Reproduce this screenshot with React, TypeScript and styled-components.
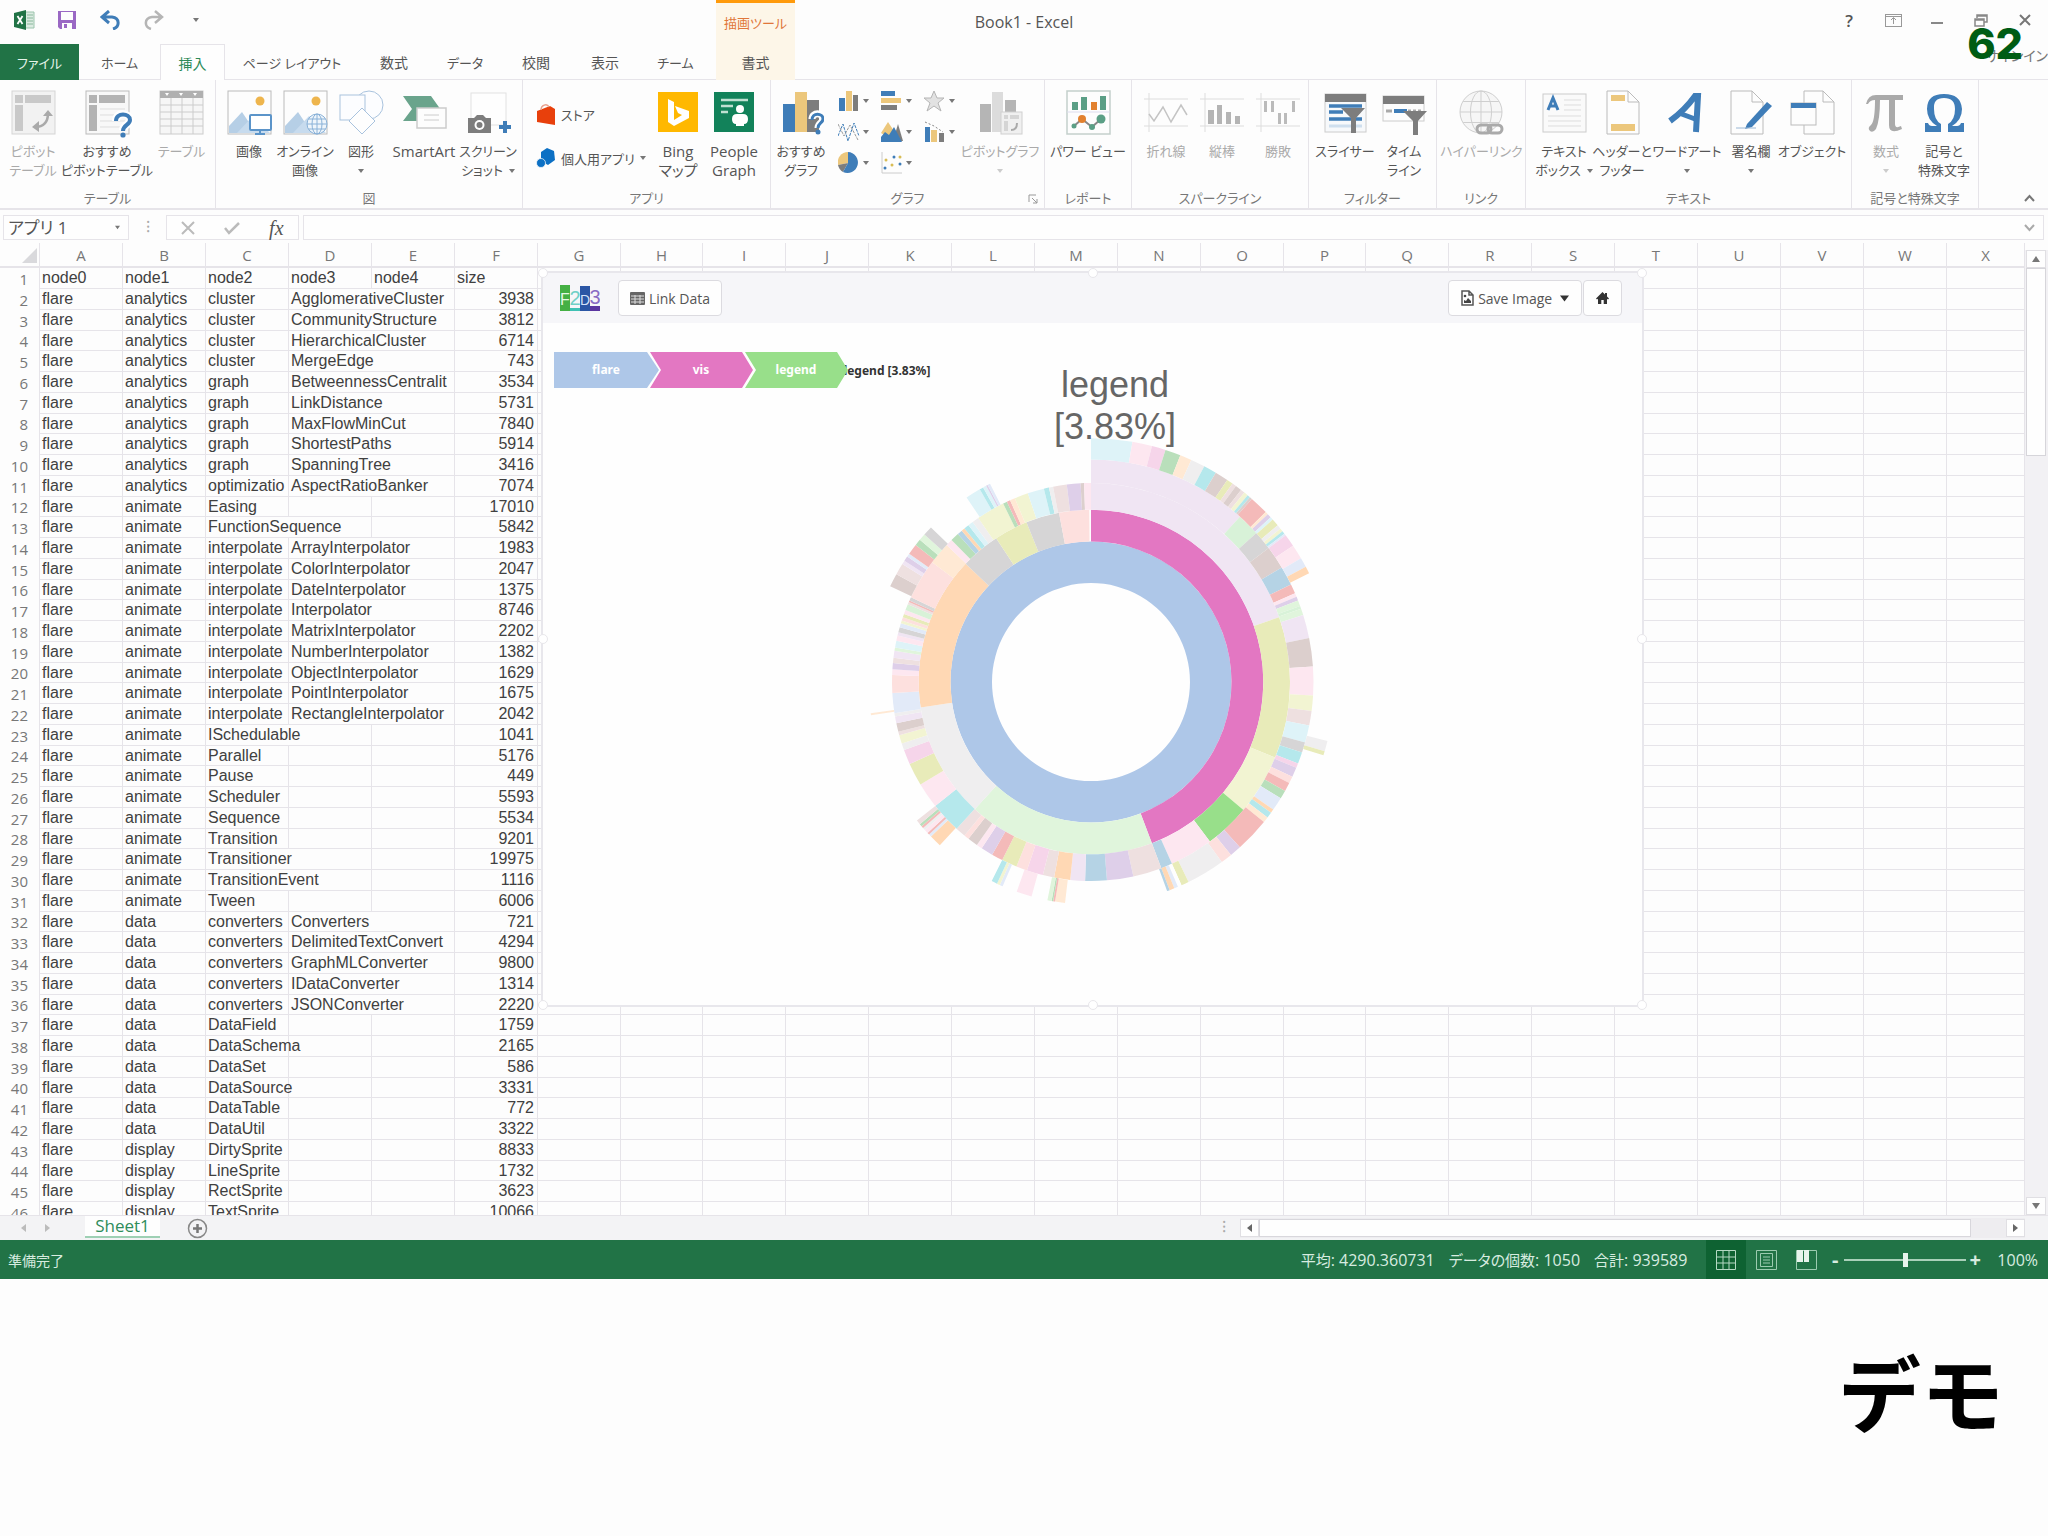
import React from "react";
import styled, { createGlobalStyle, css } from "styled-components";

const green = "#217346";
const line = "#e6e4e9";
const ui = `"Open Sans", "Noto Sans CJK JP", sans-serif`;
const sheetFont = `"Liberation Sans", "Noto Sans CJK JP", sans-serif`;

const Global = createGlobalStyle`
  * { box-sizing: border-box; }
  body { margin: 0; background: #fdfdfd; font-family: ${ui}; color: #555; overflow-x: hidden; }
  button, input { font: inherit; color: inherit; border: 0; background: none; padding: 0; margin: 0; }
  svg { display: block; flex: none; }
`;

const Page = styled.div`
  position: relative;
  min-height: 100vh;
  display: flex;
  flex-direction: column;
  overflow: hidden;
`;

/* ---------- title bar and tabs ---------- */
const Header = styled.header`
  display: grid;
  grid-template-columns: 716px 79px 1fr;
  grid-template-rows: 44px 36px;
  background: #fdfdfd;
`;
const QuickAccess = styled.div`
  grid-area: 1 / 1;
  display: flex;
  align-items: center;
  padding: 0 0 4px 13px;
  gap: 21px;
`;
const PlainButton = styled.button`
  display: flex;
  align-items: center;
  justify-content: center;
  min-width: 22px;
  height: 22px;
`;
const ContextTitle = styled.div`
  grid-area: 1 / 2;
  border-top: 3px solid #ff9a0a;
  background: #fdf6e8;
  color: #e0763a;
  font-size: 13px;
  font-feature-settings: "palt";
  line-height: 40px;
  text-align: center;
  white-space: nowrap;
`;
const BookTitle = styled.h1`
  grid-column: 1 / -1;
  grid-row: 1;
  justify-self: center;
  margin: 0;
  font-size: 16px;
  font-weight: 400;
  line-height: 44px;
`;
const WindowControls = styled.div`
  grid-column: 3;
  grid-row: 1;
  justify-self: end;
  display: flex;
  align-items: center;
  gap: 22px;
  padding: 0 12px 4px 0;
  font-size: 17px;
  font-weight: 600;
`;
const Tabs = styled.nav`
  grid-area: 2 / 1;
  display: flex;
  border-bottom: 1px solid ${line};
`;
const Tab = styled.button<{ $w: number; $kana?: boolean; $kind?: "file" | "active" | "context" }>`
  width: ${(p) => p.$w}px;
  height: 36px;
  font-size: ${(p) => (p.$kana ? 13 : 14)}px;
  font-feature-settings: "palt";
  white-space: nowrap;
  ${(p) => p.$kind === "file" && css`background: ${green}; color: #e4f3ea;`}
  ${(p) => p.$kind === "active" && css`
    background: #fefefe; color: #2c8a57;
    border: 1px solid ${line}; border-bottom: 0;
  `}
  ${(p) => p.$kind === "context" && css`grid-area: 2 / 2; background: #fdf6e8;`}
`;
const SignIn = styled.a`
  grid-area: 2 / 3;
  border-bottom: 1px solid ${line};
  color: #777;
  font-size: 14px;
  font-feature-settings: "palt";
  line-height: 24px;
  text-align: right;
  text-decoration: none;
`;
const SlideNumber = styled.div`
  position: absolute;
  top: 16px;
  right: 25px;
  font: 800 43px/54px Inter, sans-serif;
  color: #005c14;
`;

/* ---------- ribbon ---------- */
const Ribbon = styled.div`
  display: flex;
  height: 130px;
  border-bottom: 2px solid ${line};
  background: #fdfdfd;
`;
const Group = styled.section<{ $w: number }>`
  position: relative;
  width: ${(p) => p.$w}px;
  flex: none;
  display: flex;
  flex-direction: column;
  border-right: 1px solid ${line};
`;
const GroupItems = styled.div<{ $pad?: number }>`
  flex: 1;
  display: flex;
  padding: 10px 0 0 ${(p) => p.$pad ?? 0}px;
`;
const GroupLabel = styled.div`
  height: 19px;
  font-size: 13px;
  line-height: 18px;
  font-feature-settings: "palt";
  text-align: center;
  color: #777;
`;
const Big = styled.button<{ $w: number; $off?: boolean; $latin?: boolean }>`
  width: ${(p) => p.$w}px;
  flex: none;
  display: flex;
  flex-direction: column;
  align-items: center;
  align-self: flex-start;
  gap: 7px;
  font-size: ${(p) => (p.$latin ? 15 : 13)}px;
  font-feature-settings: "palt";
  line-height: 19px;
  white-space: nowrap;
  color: ${(p) => (p.$off ? "#aaa" : "#555")};
`;
const BigText = styled.span`
  display: flex;
  flex-direction: column;
  align-items: center;
`;
const TextLine = styled.span`
  display: flex;
  align-items: center;
  gap: 6px;
  height: 19px;
`;
const AppList = styled.div`
  width: 128px;
  display: flex;
  flex-direction: column;
  gap: 20px;
  padding: 12px 0 0 13px;
`;
const AppButton = styled.button`
  display: flex;
  align-items: center;
  gap: 5px;
  height: 24px;
  font-size: 13px;
  font-feature-settings: "palt";
  white-space: nowrap;
`;
const ChartGrid = styled.div`
  width: 135px;
  display: grid;
  grid-template-columns: repeat(3, 43px);
  grid-auto-rows: 31px;
  padding-left: 7px;
`;
const ChartButton = styled.button`
  display: flex;
  align-items: center;
  gap: 3px;
  height: 22px;
`;
const Launcher = styled.button`
  position: absolute;
  right: 6px;
  bottom: 4px;
`;
const Collapse = styled.button`
  margin: auto 13px 6px auto;
`;

/* ---------- formula bar ---------- */
const FormulaBar = styled.div`
  display: flex;
  height: 33px;
  padding: 5px 4px 3px 3px;
`;
const Box = styled.div<{ $w?: number }>`
  width: ${(p) => (p.$w ? p.$w + "px" : "auto")};
  flex: ${(p) => (p.$w ? "none" : 1)};
  display: flex;
  align-items: center;
  justify-content: space-between;
  border: 1px solid ${line};
  background: #fefefe;
  padding: 0 8px 0 4px;
`;
const NameInput = styled.input`
  width: 90px;
  font-size: 17px;
  line-height: 20px;
  font-feature-settings: "palt";
`;
const FormulaInput = styled.input`
  flex: 1;
  font-size: 16px;
  line-height: 20px;
`;
const Grip = styled.span`
  width: 37px;
  line-height: 22px;
  text-align: center;
  color: #aaa;
`;
const FxTools = styled(Box)`
  justify-content: space-around;
  padding: 0;
  margin-right: 4px;
  font: italic 400 20px/22px "Liberation Serif", serif;
`;

/* ---------- sheet ---------- */
const SheetArea = styled.main`
  position: relative;
  display: flex;
  height: 972px;
  overflow: hidden;
`;
const GridWrap = styled.div`
  flex: 1;
  min-width: 0;
`;
const Table = styled.table`
  width: 100%;
  table-layout: fixed;
  border-collapse: separate;
  border-spacing: 0;
  font: 16px/20px ${sheetFont};
  color: #404040;
  th, td { padding: 0; height: 21px; border-right: 1px solid ${line}; white-space: nowrap; overflow: hidden; }
  th { font: 400 15px/20px ${ui}; color: #777; }
  thead th { height: 25px; line-height: 22px; border-bottom: 2px solid ${line}; }
  tbody tr:nth-child(4n) th, tbody tr:nth-child(4n) td { height: 20px; line-height: 19px; }
  tbody th { text-align: right; padding-right: 11px; }
  td { border-bottom: 1px solid ${line}; padding-left: 2px; }
`;
const Cell = styled.td<{ $spill?: boolean; $num?: boolean }>`
  && { ${(p) => p.$spill && "overflow: visible;"} ${(p) => p.$num && "text-align: right; padding-right: 3px;"} }
`;
const VScroll = styled.div`
  width: 23px;
  margin-top: 7px;
  display: flex;
  flex-direction: column;
  background: #f2f1f4;
  padding: 0 2px 0 1px;
`;
const ScrollButton = styled.button`
  display: flex;
  align-items: center;
  justify-content: center;
  min-width: 19px;
  height: 18px;
  background: #fefefe;
  border: 1px solid #e0dfe3;
`;
const VThumb = styled.div`
  height: 188px;
  margin-bottom: auto;
  background: #fefefe;
  border: 1px solid #d6d5da;
`;

/* ---------- chart object floating on the sheet ---------- */
const Panel = styled.section`
  position: absolute;
  left: 541px;
  top: 28px;
  width: 1103px;
  height: 736px;
  background: #fefefe;
  border: 2px solid #e8e7ec;
`;
const Handle = styled.i<{ $x: string; $y: string }>`
  position: absolute;
  left: ${(p) => p.$x};
  top: ${(p) => p.$y};
  width: 10px;
  height: 10px;
  margin: -5px;
  border-radius: 50%;
  background: #fff;
  border: 1px solid #e8e7eb;
`;
const PanelBar = styled.div`
  display: flex;
  align-items: center;
  height: 50px;
  padding: 0 20px 0 17px;
  background: #f6f6f9;
`;
const PanelButton = styled.button<{ $w: number; $gap?: number }>`
  display: flex;
  align-items: center;
  justify-content: center;
  gap: 4px;
  width: ${(p) => p.$w}px;
  height: 36px;
  margin-left: ${(p) => p.$gap ?? 0}px;
  border: 1px solid #dcdbe0;
  border-radius: 4px;
  background: #fefefe;
  font-size: 14px;
  white-space: nowrap;
`;
const Spacer = styled.div`flex: 1;`;
const PanelBody = styled.div`
  display: grid;
  padding: 29px 0 0 11px;
  svg { grid-area: 1 / 1; }
`;
const Sunburst = styled.svg`
  justify-self: center;
  margin-right: 15px;
`;

/* ---------- sheet tabs and status bar ---------- */
const SheetTabs = styled.div`
  display: flex;
  height: 25px;
  background: #f3f3f5;
  border-top: 1px solid ${line};
`;
const SheetNav = styled.div`
  width: 85px;
  display: flex;
  align-items: center;
  padding-left: 13px;
  gap: 1px;
  color: #bbb;
`;
const SheetTab = styled.button`
  width: 75px;
  height: 22px;
  background: #fefefe;
  border-bottom: 2px solid #9ed0b4;
  color: #2f8d5b;
  font-size: 17px;
  line-height: 18px;
`;
const AddSheet = styled.button`
  margin: 1px auto 0 27px;
  align-self: center;
`;
const HScroll = styled.div`
  width: 785px;
  display: flex;
  align-items: center;
  background: #eeedf0;
  margin-right: 23px;
  margin-top: 2px;
  height: 20px;
`;
const HThumb = styled.div`
  width: 712px;
  height: 18px;
  margin-right: auto;
  background: #fefefe;
  border: 1px solid #d8d7dc;
`;
const Dots = styled.span`
  width: 18px;
  line-height: 20px;
  color: #aaa;
`;
const StatusBar = styled.footer`
  display: flex;
  align-items: center;
  height: 39px;
  padding: 0 10px 0 8px;
  background: ${green};
  color: #d8ece0;
  font-size: 14px;
  font-feature-settings: "palt";
  white-space: nowrap;
`;
const Stats = styled.div`
  display: flex;
  gap: 14px;
  margin-left: auto;
  margin-right: 19px;
  font-size: 16px;
`;
const StatLabel = styled.span`
  font-size: 15px;
`;
const ViewButton = styled.button<{ $on?: boolean }>`
  display: flex;
  align-items: center;
  justify-content: center;
  width: 40px;
  height: 39px;
  background: ${(p) => (p.$on ? "#0e6232" : "transparent")};
`;
const ZoomButton = styled.button`
  width: 18px;
  font-size: 20px;
  font-weight: 700;
  line-height: 36px;
`;
const ZoomSlider = styled.input`
  appearance: none;
  width: 122px;
  height: 20px;
  &::-webkit-slider-runnable-track { height: 2px; background: #a9d0b9; }
  &::-webkit-slider-thumb { appearance: none; width: 5px; height: 14px; margin-top: -6px; background: #e8f4ec; }
`;
const ZoomLevel = styled.span`
  margin-left: 13px;
  font-size: 16px;
`;
const Caption = styled.h2`
  margin: 49px 44px 0 auto;
  font: 700 83px/124px "Noto Sans CJK JP", sans-serif;
  color: #000;
`;

/* ---------- icons ---------- */
const Caret = ({ c = "#777", s = 6 }: { c?: string; s?: number }) => (
  <svg width={s} height={s} viewBox="0 0 6 6"><path d="M0 1h6L3 5z" fill={c} /></svg>
);
const I: React.FC<{ children: React.ReactNode }> = ({ children }) => (
  <svg width="45" height="45" viewBox="0 0 45 45" fill="none">{children}</svg>
);
const AskBox = styled.svg`
  margin-bottom: -4px;
`;
const blue = "#3f7db8";
const tan = "#ecc77c";
const grey = "#7d7d7d";

const PivotIcon = () => (
  <I>
    <rect x="1" y="1" width="43" height="43" fill="#f2f2f2" stroke="#d5d5d5" />
    <path d="M4 5h8v8H4zM14 5h26v8H14zM4 15h8v26H4z" fill="#c9c9c9" />
    <path d="M24 37c9 0 13-5 13-14" stroke="#aaa" strokeWidth="2.5" />
    <path d="M32 26l5-6 5 6zM28 31l-7 6 7 5z" fill="#aaa" />
  </I>
);
const PivotAskIcon = () => (
  <AskBox width="53" height="49" viewBox="-4 0 53 49" fill="none">
    <rect x="1" y="1" width="43" height="43" fill="#f8f8f8" stroke="#bbb" />
    <path d="M4 5h8v8H4zM14 5h26v8H14zM4 15h8v26H4z" fill="#b3b3b3" />
    <path d="M15 19h25M15 25h25M15 31h25M15 37h25" stroke="#ddd" />
    <path d="M31 31c0-10 14-8 14-1 0 5-7 5-7 10" stroke="#fff" strokeWidth="8" />
    <path d="M31 31c0-9 14-8 14-1 0 5-7 5-7 11" stroke={blue} strokeWidth="4" />
    <circle cx="38" cy="45" r="2.6" fill={blue} />
  </AskBox>
);
const TableIcon = () => (
  <I>
    <rect x="1" y="1" width="43" height="43" fill="#f6f6f6" stroke="#ccc" />
    <path d="M1 1h43v7H1z" fill="#b0b0b0" />
    <path d="M6 3h4l-2 3zM20 3h4l-2 3zM34 3h4l-2 3z" fill="#fff" />
    <path d="M1 15h43M1 22h43M1 29h43M1 36h43M12 8v36M23 8v36M34 8v36" stroke="#ccc" />
  </I>
);
const Photo = () => (
  <g>
    <rect x="1" y="1" width="43" height="43" fill="#fdfdfd" stroke="#bbb" />
    <circle cx="33" cy="11" r="4.5" fill="#eeb54d" />
    <path d="M2 43V36L15 22l14 21z" fill="#b6cfe6" />
    <path d="M10 43L26 26l17 17z" fill="#c7dbee" />
  </g>
);
const PictureIcon = () => (
  <I><Photo /><rect x="23" y="25" width="21" height="15" rx="1" fill="#fff" stroke="#5b94c9" strokeWidth="2" /><path d="M33 40v3M28 44h10" stroke="#5b94c9" strokeWidth="2" /></I>
);
const Globe = ({ cx, cy, r, c, f }: { cx: number; cy: number; r: number; c: string; f: string }) => (
  <g stroke={c} fill="none">
    <circle cx={cx} cy={cy} r={r} fill={f} />
    <ellipse cx={cx} cy={cy} rx={r / 2} ry={r} />
    <path d={`M${cx - r} ${cy}h${2 * r}M${cx} ${cy - r}v${2 * r}M${cx - r * 0.85} ${cy - r / 2}h${r * 1.7}M${cx - r * 0.85} ${cy + r / 2}h${r * 1.7}`} />
  </g>
);
const OnlinePictureIcon = () => <I><Photo /><Globe cx={34} cy={34} r={10} c="#8ab2d8" f="#eef5fb" /></I>;
const ShapesIcon = () => (
  <I><circle cx="30" cy="15" r="14" fill="#fcfdff" stroke="#a9c3de" /><rect x="1" y="5" width="25" height="25" fill="#fcfdff" stroke="#a9c3de" /><path d="M23 18l13 13-13 13-13-13z" fill="#fefefe" stroke="#a9c3de" /></I>
);
const SmartArtIcon = () => (
  <I><path d="M1 6h28l10 14H16v11H1l9-12z" fill="#6aa48c" /><rect x="15" y="18" width="29" height="20" fill="#fdfdfd" stroke="#ccc" strokeWidth="1.5" /><path d="M22 25h15M22 30h15" stroke="#ccc" /></I>
);
const ScreenshotIcon = () => (
  <I><rect x="5" y="3" width="35" height="32" fill="#fefefe" stroke="#e2e2e2" /><path d="M2 28h6l3-3h6l3 3h5v15H2z" fill={grey} /><circle cx="13.500" cy="35" r="5" fill="#fff" /><circle cx="13.500" cy="35" r="3" fill={grey} /><path d="M39 31v12M33 37h12" stroke={blue} strokeWidth="4" /></I>
);
const StoreIcon = () => (
  <svg width="20" height="24" viewBox="0 0 20 24"><path d="M1 9l13-5 5 3v16L1 20z" fill="#e8400c" /><path d="M5 8c0-5 6-7 8-3" stroke="#e8a08c" fill="none" strokeWidth="1.500" /></svg>
);
const MyAppsIcon = () => (
  <svg width="20" height="22" viewBox="0 0 20 22"><path d="M11 1l7 3 1 9-7 5-7-4V5z" fill="#0c70c4" /><circle cx="5" cy="16" r="4.500" fill="#0c70c4" stroke="#fff" strokeWidth=".7" /></svg>
);
const BingIcon = () => (
  <I><rect x="2" y="2" width="40" height="40" fill="#ffb800" /><path d="M12 9l6 3v18l8-5-4-2-3-7 14 5v7L18 36l-6-4z" fill="#fff" /></I>
);
const PeopleIcon = () => (
  <I><rect x="2" y="2" width="40" height="40" fill="#12825a" /><path d="M9 10h27M9 16h12M9 22h7" stroke="#bfe0d1" strokeWidth="2.5" /><circle cx="28" cy="19" r="4" fill="#fff" /><path d="M20 29q0-5 5-5h6q5 0 5 5t-4 5v2h-8v-2q-4 0-4-5z" fill="#fff" /></I>
);
const RecChartIcon = () => (
  <I><path d="M4 14h12v28H4z" fill={blue} /><path d="M16 2h12v40H16z" fill={tan} /><path d="M28 10h12v32H28z" fill={grey} /><path d="M33 29c0-7 11-7 11 0 0 4-5 4-5 9" stroke="#fff" strokeWidth="7" /><path d="M33 30c0-8 11-7 11-1 0 4-5 4-5 9" stroke={blue} strokeWidth="3" /><circle cx="39" cy="42" r="2.500" fill={blue} /></I>
);
const PivotChartIcon = () => (
  <I><path d="M2 14h11v28H2z" fill="#b5b5b5" /><path d="M14 2h11v40H14z" fill="#dcdcdc" /><path d="M27 10h11v12H27z" fill="#b5b5b5" /><rect x="23" y="22" width="21" height="22" fill="#f0f0f0" stroke="#d0d0d0" /><path d="M26 25h4v4h-4zM32 25h9v4h-9zM26 31h4v10h-4z" fill="#d5d5d5" /><path d="M33 40q6 0 6-7" stroke="#aaa" strokeWidth="2" /></I>
);
const small: React.ReactNode[] = [
  <><path d="M1 8h6v13H1z" fill={blue} /><path d="M8 1h6v20H8z" fill={tan} /><path d="M15 5h5v16h-5z" fill={grey} /></>,
  <><path d="M0 1h14v5H0z" fill={blue} /><path d="M0 8h20v5H0z" fill={tan} /><path d="M0 15h16v5H0z" fill={grey} /></>,
  <><path d="M10 1l3 7h7l-6 5 3 8-7-5-7 5 3-8-6-5h7z" fill="#e2e2e2" stroke="#b5b5b5" /></>,
  <><path d="M0 15L5 3l5 17 6-18 5 13" stroke={blue} fill="none" strokeDasharray="3 1" /><path d="M0 3l6 12L12 4l8 15" stroke="#9a9a9a" fill="none" strokeDasharray="3 1" /></>,
  <><path d="M12 20L17 3l5 17z" fill={grey} /><path d="M0 12L7 1l8 12v8z" fill={tan} /><path d="M0 21v-5l4-5 4 3 5-8 8 15z" fill={blue} /></>,
  <><path d="M1 6h5v15H1z" fill={blue} /><path d="M7 9h6v12H7z" fill={tan} /><path d="M15 12h5v9h-5z" fill={grey} /><path d="M1 1l9 4 9 6" stroke="#888" fill="none" strokeDasharray="2 2" /></>,
  <><path d="M10 11L10 0A10.500 10.500 0 0 0 0 13z" fill={tan} /><path d="M10 11L0 13a10.500 10.500 0 0 0 5 7z" fill={grey} /><path d="M10 11V0a10.500 10.500 0 1 1-5 20z" fill={blue} /></>,
  <><path d="M1 0v21h20" stroke="#ccc" fill="none" /><g fill={blue}><circle cx="4" cy="16" r="1.500" /><circle cx="13" cy="5" r="1.500" /><circle cx="19" cy="12" r="1.500" /></g><g fill="#d8bd55"><circle cx="5" cy="8" r="1.500" /><circle cx="11" cy="13" r="1.500" /><circle cx="19" cy="5" r="1.500" /></g></>,
];
const PowerViewIcon = () => (
  <I><rect x="1" y="1" width="43" height="43" fill="#fdfdfd" stroke="#c4cfcb" strokeWidth="1.5" /><path d="M1 22h43" stroke="#dde" /><path d="M6 12h6v8H6zM15 7h6v13h-6zM34 6h6v14h-6z" fill="#5b9f86" /><path d="M25 12h6v8h-6z" fill="#e2812f" /><path d="M8 36l8-7 10 8 9-8" stroke="#888" strokeWidth="2" /><circle cx="8" cy="36" r="2.500" fill="#5b9f86" /><circle cx="16" cy="29" r="4" fill="#e2812f" /><circle cx="26" cy="37" r="3" fill="#5b9f86" /><circle cx="35" cy="29" r="4.500" fill="#5b9f86" /></I>
);
const axes = <path d="M0 9h44M0 36h44M5 3v39" stroke="#ddd" />;
const SparkLine = () => <I>{axes}<path d="M5 24l5 7 9-14 8 15 10-17 6 10" stroke="#c4c4c4" strokeWidth="1.500" /></I>;
const SparkCol = () => <I>{axes}<path d="M8 20h6v14H8zM17 15h5v19h-5zM26 22h5v12h-5zM35 26h5v8h-5z" fill="#b4b4b4" /></I>;
const SparkWin = () => <I>{axes}<path d="M8 11h3v11H8zM15 11h3v11h-3zM22 23h3v11h-3zM28 23h3v11h-3zM36 11h3v11h-3z" fill="#bbb" /></I>;
const Funnel = ({ x, y }: { x: number; y: number }) => (
  <path transform={`translate(${x} ${y})`} d="M0 0h24L15 10v15h-5V10z" fill={grey} />
);
const SlicerIcon = () => (
  <I><rect x="2" y="4" width="41" height="38" fill="#f7f9fb" stroke="#ccc" /><path d="M2 4h41v8H2z" fill={grey} /><path d="M6 16h33M6 22h14M6 29h33" stroke={blue} strokeWidth="3.500" /><path d="M6 36h33" stroke="#cfdfee" strokeWidth="3" /><Funnel x={18} y={18} /></I>
);
const TimelineIcon = () => (
  <I><rect x="1" y="6" width="41" height="25" fill="#fdfdfd" stroke="#ccc" /><path d="M1 6h41v8H1z" fill={grey} /><path d="M4 21h6M26 21h3M31 21h3M36 21h3" stroke="#aaa" strokeWidth="3" /><path d="M12 21h13" stroke={blue} strokeWidth="4" /><Funnel x={21} y={21} /></I>
);
const LinkIcon = () => (
  <I><Globe cx={22} cy={22} r={21} c="#cfcfcf" f="#f6f6f6" /><rect x="18" y="35" width="14" height="8" rx="4" stroke="#aaa" strokeWidth="3" /><rect x="29" y="35" width="14" height="8" rx="4" stroke="#aaa" strokeWidth="3" /></I>
);
const TextBoxIcon = () => (
  <I><rect x="1" y="4" width="43" height="38" fill="#fafafa" stroke="#ccc" /><path d="M6 20l5-12 5 12M8 16h6" stroke={blue} strokeWidth="3" /><path d="M22 10h17M22 15h17M22 20h17M6 26h33M6 31h33M6 36h33" stroke="#ddd" /></I>
);
const Doc = ({ x, w = 32 }: { x: number; w?: number }) => (
  <path d={`M${x} 1h${w - 11}l11 11v32h-${w}zM${x + w - 11} 1v11h11`} fill="#fdfdfd" stroke="#bbb" />
);
const HeaderIcon = () => <I><Doc x={7} /><path d="M11 5h14v6H11zM11 34h24v7H11z" fill={tan} /></I>;
const WordArtIcon = () => <I><path d="M5 31Q20 20 30 6l3 0-2 36" stroke={blue} strokeWidth="6" fill="none" /><path d="M14 23l16 6" stroke={blue} strokeWidth="5" /></I>;
const SignIcon = () => (
  <I><Doc x={2} /><path d="M18 34L38 12l5 4-20 21-7 2z" fill={blue} /><path d="M7 38h20" stroke="#9bb8d5" /></I>
);
const ObjectIcon = () => (
  <I><Doc x={14} w={30} /><rect x="1" y="13" width="25" height="22" fill="#fdfdfd" stroke="#bbb" /><path d="M1 13h25v5H1z" fill={blue} /></I>
);
const EquationIcon = () => (
  <I><path d="M2 14q2-9 10-9h27v5h-8v24q0 5 6 2l1 3q-13 6-13-4V10H16q0 20-4 29-3 4-6 2-3-3 1-6 4-4 4-25-5 0-7 4z" fill="#aaa" /></I>
);
const OmegaIcon = () => (
  <I><path d="M3 42V33h3q1 3 4 3h5Q5 30 5 19 5 4 22 4t18 15q0 11-10 17h5q3 0 4-3h3v9H26v-8q7-4 7-15Q33 8 22 8T12 19q0 11 7 15v8z" fill={blue} /></I>
);

/* ---------- ribbon data ---------- */
type Item = { w: number; icon: React.ReactNode; lines: string[]; off?: boolean; latin?: boolean; caret?: boolean };
const RibbonButton = ({ w, icon, lines, off, latin, caret }: Item) => (
  <Big $w={w} $off={off} $latin={latin}>
    {icon}
    <BigText>
      {lines.map((t, i) => (
        <TextLine key={t}>{t}{caret && i === 1 && <Caret />}</TextLine>
      ))}
      {caret && lines.length === 1 && <TextLine><Caret c={off ? "#ccc" : "#777"} /></TextLine>}
    </BigText>
  </Big>
);
const RibbonGroup = ({ w, label, pad, items, children }: { w: number; label: string; pad?: number; items?: Item[]; children?: React.ReactNode }) => (
  <Group $w={w} aria-label={label}>
    <GroupItems $pad={pad}>{children}{items?.map((it) => <RibbonButton key={it.lines[0]} {...it} />)}</GroupItems>
    <GroupLabel>{label}</GroupLabel>
  </Group>
);

/* ---------- sheet data ---------- */
const columns = "ABCDEFGHIJKLMNOPQRSTUVWX".split("");
const source = `node0|node1|node2|node3|node4|size
analytics|cluster|AgglomerativeCluster|3938
analytics|cluster|CommunityStructure|3812
analytics|cluster|HierarchicalCluster|6714
analytics|cluster|MergeEdge|743
analytics|graph|BetweennessCentralit|3534
analytics|graph|LinkDistance|5731
analytics|graph|MaxFlowMinCut|7840
analytics|graph|ShortestPaths|5914
analytics|graph|SpanningTree|3416
analytics|optimizatio|AspectRatioBanker|7074
animate|Easing||17010
animate|FunctionSequence||5842
animate|interpolate|ArrayInterpolator|1983
animate|interpolate|ColorInterpolator|2047
animate|interpolate|DateInterpolator|1375
animate|interpolate|Interpolator|8746
animate|interpolate|MatrixInterpolator|2202
animate|interpolate|NumberInterpolator|1382
animate|interpolate|ObjectInterpolator|1629
animate|interpolate|PointInterpolator|1675
animate|interpolate|RectangleInterpolator|2042
animate|ISchedulable||1041
animate|Parallel||5176
animate|Pause||449
animate|Scheduler||5593
animate|Sequence||5534
animate|Transition||9201
animate|Transitioner||19975
animate|TransitionEvent||1116
animate|Tween||6006
data|converters|Converters|721
data|converters|DelimitedTextConvert|4294
data|converters|GraphMLConverter|9800
data|converters|IDataConverter|1314
data|converters|JSONConverter|2220
data|DataField||1759
data|DataSchema||2165
data|DataSet||586
data|DataSource||3331
data|DataTable||772
data|DataUtil||3322
display|DirtySprite||8833
display|LineSprite||1732
display|RectSprite||3623
display|TextSprite||10066`.split("\n").map((r) => r.split("|"));

const blanks = columns.slice(6);
const Row = ({ cells, n }: { cells: string[]; n: number }) => (
  <tr>
    <th scope="row">{n}</th>
    {n === 1 ? (
      cells.map((c) => <Cell key={c}>{c}</Cell>)
    ) : (
      <>
        <Cell>flare</Cell>
        <Cell>{cells[0]}</Cell>
        {cells[2] ? (
          <><Cell>{cells[1]}</Cell><Cell colSpan={2}>{cells[2]}</Cell></>
        ) : cells[1].length > 11 ? (
          <><Cell colSpan={2}>{cells[1]}</Cell><Cell /></>
        ) : (
          <><Cell $spill>{cells[1]}</Cell><Cell /><Cell /></>
        )}
        <Cell $num>{cells[3]}</Cell>
      </>
    )}
    {blanks.map((c) => <Cell key={c} />)}
  </tr>
);

/* ---------- sunburst ---------- */
const radii = [99, 140.5, 172.3, 199, 222.5, 243.7];
const pal: Record<string, string> = {
  B: "#aec7e8", M: "#e377c2", L: "#f0e5f3", Y: "#e8ebb9", y: "#f2f4d2", G: "#98df8a", g: "#e0f5dc",
  e: "#efeeef", E: "#d6d5d6", O: "#ffd8b4", o: "#ffe9d4", P: "#fde0de", p: "#fde7f0", m: "#f6d5ea",
  C: "#b5e8ec", c: "#def3f8", b: "#b5d3e5", l: "#e2eaf8", R: "#f4bab9", n: "#dccfcd", N: "#eee0e0",
  v: "#decfe9", k: "#b9dfbb", W: "#fefefe", K: "#d8f2d8",
};
// Each entry: ring index, start angle, then colour key and end angle pairs.
const rings: [number, number, string][] = [
  [0, 0, "B360"],
  [1, 0, "M159.3 g222.4 e261.5 O313.3 E326.6 Y338 E349.3 P359.4"],
  [2, 0, "L71 Y112.3 y130 G143.3 p156 b159.3 N167.7 v175.4 b181.7 L186 O190.7 N194 m198.8 P202 Y206.5 R209.8 v213.3 p215 n218 P219.5 N222.5 C231.5 p239 Y245.7 m250 e252 y254.5 N255.500 n258 L260 e261 l266.8 P272 p273.7 v275.5 N277 L279 g280 c282 p283.5 L284.500 E286 l287.2 y288 P289 Y290 p291.2 K293 N293.7 R294.2 E295.2 P307 o313.500 p315.500 k318 b319.500 O320.500 C322 c323.500 e325.500 y333.8 k335 R336 o337.500 y341.500 c346.3 C347.800 e349 N353 v357 n358 p360"],
  [3, 0, "L42 K48 E53 n59 b64 R66.500 p67.500 v68.500 g70 K70.800 g72.500 L78.6 n86 p93.5 y97.5 N101.3 c105.8 E108.500 C111.5 m112.700 v115.2 P117 R119.3 k121.500 l125 O126 C127.500 o129 R138 v141 P144 e154 Y156 W157 l158 O159.3 b160"],
  [3, 186.7, "o189.300 R189.800 k190.2 g191.3"],
  [3, 195.5, "p199.5"],
  [3, 203.4, "l204.200 y205 C206.5"],
  [3, 222.8, "O226 l226.700 R227.300 p228.300 e229 R229.600 k230.300 N231.5"],
  [3, 261.4, "o261.9"],
  [3, 295.5, "n299 N302 L303 v304.300 l305.200 R308 k309.700 g311.5 E314"],
  [3, 326, "c330 C331 c331.900 v332.300 l333"],
  [4, 0, "c9.8 p14.5 m17.8 k21.5 o24.3 e27.7 C30.8 n34 Y35.500 N36.500 n38 N39 y40 C40.700 n41.3 R45.8 o46.500 v47.500 c48.200 Y50 e51 y51.800 C52.500 l53 m56 p59.500 l61.800 O63.500"],
  [4, 104, "e106.500 Y107.500"],
];
const pt = (r: number, a: number) => {
  const t = (a * Math.PI) / 180;
  return `${(r * Math.sin(t)).toFixed(2)} ${(-r * Math.cos(t)).toFixed(2)}`;
};
const arc = (ring: number, a: number, b: number) => {
  const r0 = radii[ring], r1 = radii[ring + 1];
  const big = b - a > 180 ? 1 : 0;
  return `M${pt(r1, a)}A${r1} ${r1} 0 ${big} 1 ${pt(r1, b)}L${pt(r0, b)}A${r0} ${r0} 0 ${big} 0 ${pt(r0, a)}Z`;
};
const segments = rings.flatMap(([ring, from, spec]) => {
  let a = from;
  return spec.split(" ").map((s) => {
    const end = parseFloat(s.slice(1));
    const seg = { d: arc(ring, a, Math.min(end, 359.99)), fill: pal[s[0]] };
    a = end;
    return seg;
  });
});

const Chart = () => (
  <Sunburst width="500" height="590" viewBox="-250 -330 500 590" role="img" aria-label="legend">
    {segments.map((s, i) => <path key={i} d={s.d} fill={s.fill} />)}
    <g fontFamily="Liberation Sans, sans-serif" fontSize="36" fill="#666" textAnchor="middle">
      <text x="24" y="-285">legend</text>
      <text x="24" y="-243">[3.83%]</text>
    </g>
  </Sunburst>
);
const Trail = () => (
  <svg width="400" height="37" viewBox="0 0 400 37">
    <g fontFamily="Noto Sans, sans-serif" fontWeight="700" fontSize="12" textAnchor="middle">
      <text x="333" y="23" fill="#333">legend [3.83%]</text>
      <path d="M0 0h93l12 18-12 18H0z" fill="#aec7e8" />
      <path d="M96 0h92l11 18-11 18H96l11-18z" fill="#e377c2" />
      <path d="M191 0h92l11 18-11 18h-92l11-18z" fill="#98df8a" />
      <g fill="#fff"><text x="52" y="22">flare</text><text x="147" y="22">vis</text><text x="242" y="22">legend</text></g>
    </g>
  </svg>
);
const Logo = () => (
  <svg width="40" height="26" viewBox="0 0 40 26" fontFamily="Liberation Sans, sans-serif" fontSize="20" textAnchor="middle">
    <path d="M0 0h10v26H0z" fill="#45b044" /><path d="M10 23h10v3H10z" fill="#3fc1b4" /><path d="M20 1h10v25H20z" fill="#2b56a5" /><path d="M30 21h10v5H30z" fill="#5b35a0" />
    <text x="5" y="20" fill="#e6f8e4" fontSize="16">F</text><text x="15" y="20" fill="#6fd0c6">2</text><text x="25" y="20" fill="#d5e2f8" fontSize="14">D</text><text x="35" y="19" fill="#8a6cc4">3</text>
  </svg>
);

export default function App() {
  return (
    <Page>
      <Global />
      <Header>
        <QuickAccess>
          <PlainButton aria-label="Excel">
            <svg width="21" height="20" viewBox="0 0 21 20"><path d="M10 2h10v16H10z" fill="#dcebe2" stroke="#9cc4ad" /><path d="M13 5h6M13 8h6M13 11h6M13 14h6" stroke="#8ab89d" /><path d="M0 3l12-3v20L0 17z" fill={green} /><path d="M3.500 6l5 8M8.500 6l-5 8" stroke="#fff" strokeWidth="1.800" /></svg>
          </PlainButton>
          <PlainButton aria-label="上書き保存">
            <svg width="20" height="20" viewBox="0 0 20 20"><path d="M1 1h18v18H3l-2-2z" fill="#9a68c4" /><path d="M4 2h12v8H4zM5 13h10v6H5z" fill="#fdfdfd" /><path d="M7 14h3v4H7z" fill="#9a68c4" /></svg>
          </PlainButton>
          <PlainButton aria-label="元に戻す">
            <svg width="21" height="20" viewBox="0 0 21 20"><path d="M9 1L2 7l7 6M3 7h9c8 1 8 10 1 12" fill="none" stroke={blue} strokeWidth="3" /></svg>
          </PlainButton>
          <PlainButton aria-label="やり直し">
            <svg width="21" height="20" viewBox="0 0 21 20"><path d="M12 1l7 6-7 6M18 7H9c-8 1-8 10-1 12" fill="none" stroke="#b5b5b5" strokeWidth="2.500" /></svg>
          </PlainButton>
          <PlainButton aria-label="カスタマイズ"><Caret /></PlainButton>
        </QuickAccess>
        <ContextTitle>描画ツール</ContextTitle>
        <BookTitle>Book1 - Excel</BookTitle>
        <WindowControls>
          <PlainButton aria-label="ヘルプ">?</PlainButton>
          <PlainButton aria-label="リボンの表示オプション"><svg width="17" height="13" viewBox="0 0 17 13" fill="none" stroke="#999"><rect x=".5" y=".5" width="16" height="12" /><path d="M8.500 10V4M6 6l2.500-2.500L11 6M1 2.500h15" /></svg></PlainButton>
          <PlainButton aria-label="最小化"><svg width="12" height="12"><path d="M0 9h12" stroke="#888" strokeWidth="2" /></svg></PlainButton>
          <PlainButton aria-label="元のサイズに戻す"><svg width="14" height="13" viewBox="0 0 14 13" fill="none" stroke="#888" strokeWidth="1.500"><path d="M1 5h9v7H1zM3 4V1h10v7h-3M1 6h9M3 2h10" /></svg></PlainButton>
          <PlainButton aria-label="閉じる"><svg width="12" height="12"><path d="M1 1l10 10M11 1L1 11" stroke="#777" strokeWidth="2" /></svg></PlainButton>
        </WindowControls>
        <Tabs>
          <Tab $w={79} $kana $kind="file">ファイル</Tab>
          <Tab $w={81} $kana>ホーム</Tab>
          <Tab $w={65} $kind="active">挿入</Tab>
          <Tab $w={134} $kana>ページ レイアウト</Tab>
          <Tab $w={70}>数式</Tab>
          <Tab $w={72} $kana>データ</Tab>
          <Tab $w={70}>校閲</Tab>
          <Tab $w={68}>表示</Tab>
          <Tab $w={73} $kana>チーム</Tab>
        </Tabs>
        <Tab $w={79} $kind="context">書式</Tab>
        <SignIn href="#signin">サインイン</SignIn>
      </Header>

      <Ribbon>
        <RibbonGroup w={216} label="テーブル" items={[
          { w: 66, icon: <PivotIcon />, lines: ["ピボット", "テーブル"], off: true },
          { w: 82, icon: <PivotAskIcon />, lines: ["おすすめ", "ピボットテーブル"] },
          { w: 67, icon: <TableIcon />, lines: ["テーブル"], off: true },
        ]} />
        <RibbonGroup w={307} label="図" items={[
          { w: 66, icon: <PictureIcon />, lines: ["画像"] },
          { w: 46, icon: <OnlinePictureIcon />, lines: ["オンライン", "画像"] },
          { w: 66, icon: <ShapesIcon />, lines: ["図形"], caret: true },
          { w: 60, icon: <SmartArtIcon />, lines: ["SmartArt"], latin: true },
          { w: 68, icon: <ScreenshotIcon />, lines: ["スクリーン", "ショット"], caret: true },
        ]} />
        <RibbonGroup w={248} label="アプリ">
          <AppList>
            <AppButton><StoreIcon />ストア</AppButton>
            <AppButton><MyAppsIcon />個人用アプリ<Caret /></AppButton>
          </AppList>
          <RibbonButton w={54} icon={<BingIcon />} lines={["Bing", "マップ"]} latin />
          <RibbonButton w={58} icon={<PeopleIcon />} lines={["People", "Graph"]} latin />
        </RibbonGroup>
        <Group $w={274} aria-label="グラフ">
          <GroupItems>
            <RibbonButton w={60} icon={<RecChartIcon />} lines={["おすすめ", "グラフ"]} />
            <ChartGrid>
              {small.map((s, i) => (
                <ChartButton key={i} aria-label={`グラフの種類 ${i + 1}`}>
                  <svg width="22" height="22" viewBox="0 0 22 22">{s}</svg><Caret />
                </ChartButton>
              ))}
            </ChartGrid>
            <RibbonButton w={68} icon={<PivotChartIcon />} lines={["ピボットグラフ"]} off caret />
          </GroupItems>
          <GroupLabel>グラフ</GroupLabel>
          <Launcher aria-label="グラフの詳細"><svg width="10" height="10" fill="none" stroke="#999"><path d="M1 8V1h7M4 4l5 5M9 5v4H5" /></svg></Launcher>
        </Group>
        <RibbonGroup w={87} label="レポート" items={[{ w: 86, icon: <PowerViewIcon />, lines: ["パワー ビュー"] }]} />
        <RibbonGroup w={177} label="スパークライン" pad={6} items={[
          { w: 56, icon: <SparkLine />, lines: ["折れ線"], off: true },
          { w: 56, icon: <SparkCol />, lines: ["縦棒"], off: true },
          { w: 56, icon: <SparkWin />, lines: ["勝敗"], off: true },
        ]} />
        <RibbonGroup w={128} label="フィルター" pad={4} items={[
          { w: 64, icon: <SlicerIcon />, lines: ["スライサー"] },
          { w: 54, icon: <TimelineIcon />, lines: ["タイム", "ライン"] },
        ]} />
        <RibbonGroup w={89} label="リンク" items={[{ w: 89, icon: <LinkIcon />, lines: ["ハイパーリンク"], off: true }]} />
        <RibbonGroup w={326} label="テキスト" pad={10} items={[
          { w: 56, icon: <TextBoxIcon />, lines: ["テキスト", "ボックス"], caret: true },
          { w: 60, icon: <HeaderIcon />, lines: ["ヘッダーと", "フッター"] },
          { w: 70, icon: <WordArtIcon />, lines: ["ワードアート"], caret: true },
          { w: 58, icon: <SignIcon />, lines: ["署名欄"], caret: true },
          { w: 64, icon: <ObjectIcon />, lines: ["オブジェクト"] },
        ]} />
        <RibbonGroup w={127} label="記号と特殊文字" pad={5} items={[
          { w: 58, icon: <EquationIcon />, lines: ["数式"], off: true, caret: true },
          { w: 58, icon: <OmegaIcon />, lines: ["記号と", "特殊文字"] },
        ]} />
        <Collapse aria-label="リボンを折りたたむ"><svg width="11" height="8"><path d="M1 7l4.500-5L10 7" stroke="#777" strokeWidth="2" fill="none" /></svg></Collapse>
      </Ribbon>

      <FormulaBar>
        <Box $w={126}><NameInput aria-label="名前ボックス" defaultValue="アプリ 1" /><Caret s={5} /></Box>
        <Grip>⁝</Grip>
        <FxTools $w={133}>
          <svg width="14" height="14"><path d="M1 1l12 12M13 1L1 13" stroke="#bbb" strokeWidth="2" /></svg>
          <svg width="16" height="14"><path d="M1 7l4 5L15 2" stroke="#bbb" strokeWidth="2.500" fill="none" /></svg>
          <span>fx</span>
        </FxTools>
        <Box><FormulaInput aria-label="数式バー" /><svg width="11" height="8"><path d="M1 1l4.500 5L10 1" stroke="#aaa" strokeWidth="2" fill="none" /></svg></Box>
      </FormulaBar>

      <SheetArea>
        <GridWrap>
          <Table>
            <colgroup>
              <col style={{ width: 40 }} />
              {columns.map((c, i) => <col key={c} style={{ width: i === 23 ? undefined : i % 8 === 7 ? 82 : 83 }} />)}
            </colgroup>
            <thead>
              <tr>
                <th aria-label="すべて選択"><svg width="38" height="20"><path d="M37 3v15H22z" fill="#d9d9dc" /></svg></th>
                {columns.map((c) => <th key={c} scope="col">{c}</th>)}
              </tr>
            </thead>
            <tbody>{source.map((r, i) => <Row key={i} cells={r} n={i + 1} />)}</tbody>
          </Table>
        </GridWrap>
        <VScroll>
          <ScrollButton aria-label="上へ"><svg width="8" height="6"><path d="M0 6h8L4 0z" fill="#777" /></svg></ScrollButton>
          <VThumb />
          <ScrollButton aria-label="下へ"><svg width="8" height="6"><path d="M0 0h8L4 6z" fill="#777" /></svg></ScrollButton>
        </VScroll>
        <Panel>
          <PanelBar>
            <Logo />
            <PanelButton $w={104} $gap={18}>
              <svg width="15" height="13" viewBox="0 0 15 13"><rect width="15" height="13" rx="1" fill="#666" /><path d="M1 4h13M1 7h13M1 10h13M5 3v9M10 3v9" stroke="#ddd" /></svg>
              Link Data
            </PanelButton>
            <Spacer />
            <PanelButton $w={134}>
              <svg width="13" height="16" viewBox="0 0 13 16"><path d="M1 1h7l4 4v10H1zM8 1v4h4" fill="none" stroke="#555" strokeWidth="1.500" /><path d="M3 13V10l2 1 2-3 3 3v2z" fill="#444" /><circle cx="4" cy="6" r="1.300" fill="#444" /></svg>
              Save Image&nbsp;<Caret c="#333" s={9} />
            </PanelButton>
            <PanelButton $w={39} $gap={1} aria-label="ホーム">
              <svg width="13" height="12" viewBox="0 0 13 12"><path d="M0 6.500L6.500 0 9 2.500V1h2v3.500l2 2-1 1-1-.7V12H7.700V8H5.300v4H2V6.800l-1 .7z" fill="#333" /></svg>
            </PanelButton>
          </PanelBar>
          <PanelBody><Chart /><Trail /></PanelBody>
          {["0%", "50%", "100%"].flatMap((x) => ["0%", "50%", "100%"].filter((y) => !(x === "50%" && y === "50%")).map((y) => <Handle key={x + y} $x={x} $y={y} />))}
        </Panel>
      </SheetArea>

      <SheetTabs>
        <SheetNav>
          <PlainButton aria-label="前のシート"><svg width="6" height="8"><path d="M5 0v8L0 4z" fill="#bbb" /></svg></PlainButton>
          <PlainButton aria-label="次のシート"><svg width="6" height="8"><path d="M1 0v8l5-4z" fill="#bbb" /></svg></PlainButton>
        </SheetNav>
        <SheetTab>Sheet1</SheetTab>
        <AddSheet aria-label="新しいシート"><svg width="21" height="21" fill="none"><circle cx="10.500" cy="10.500" r="9" stroke="#888" strokeWidth="1.500" /><path d="M10.500 6v9M6 10.500h9" stroke="#777" strokeWidth="2.500" /></svg></AddSheet>
        <Dots>⁝</Dots>
        <HScroll>
          <ScrollButton aria-label="左へ"><svg width="5" height="8"><path d="M5 0v8L0 4z" fill="#666" /></svg></ScrollButton>
          <HThumb />
          <ScrollButton aria-label="右へ"><svg width="5" height="8"><path d="M0 0v8l5-4z" fill="#666" /></svg></ScrollButton>
        </HScroll>
      </SheetTabs>

      <StatusBar>
        準備完了
        <Stats>
          <span><StatLabel>平均</StatLabel>: 4290.360731</span>
          <span><StatLabel>データの個数</StatLabel>: 1050</span>
          <span><StatLabel>合計</StatLabel>: 939589</span>
        </Stats>
        <ViewButton $on aria-label="標準"><svg width="20" height="20" fill="none" stroke="#b5d9c4"><path d="M.5.500h19v19H.5zM7 0v20M13 0v20M0 7h20M0 13h20" /></svg></ViewButton>
        <ViewButton aria-label="ページ レイアウト"><svg width="21" height="20" fill="none" stroke="#9ccbb0"><path d="M.5.500h20v19H.5zM4.500 3.500h12v13h-12zM7 7h7M7 10h7M7 13h7" /></svg></ViewButton>
        <ViewButton aria-label="改ページ プレビュー"><svg width="21" height="20" fill="none"><path d="M.5.500h20v19H.5z" stroke="#9ccbb0" /><path d="M1 0h6v12H1zM8 0h5v12H8z" fill="#e8f4ec" /></svg></ViewButton>
        <ZoomButton aria-label="縮小">-</ZoomButton>
        <ZoomSlider type="range" aria-label="ズーム" defaultValue={50} />
        <ZoomButton aria-label="拡大">+</ZoomButton>
        <ZoomLevel>100%</ZoomLevel>
      </StatusBar>

      <Caption>デモ</Caption>
      <SlideNumber>62</SlideNumber>
    </Page>
  );
}
